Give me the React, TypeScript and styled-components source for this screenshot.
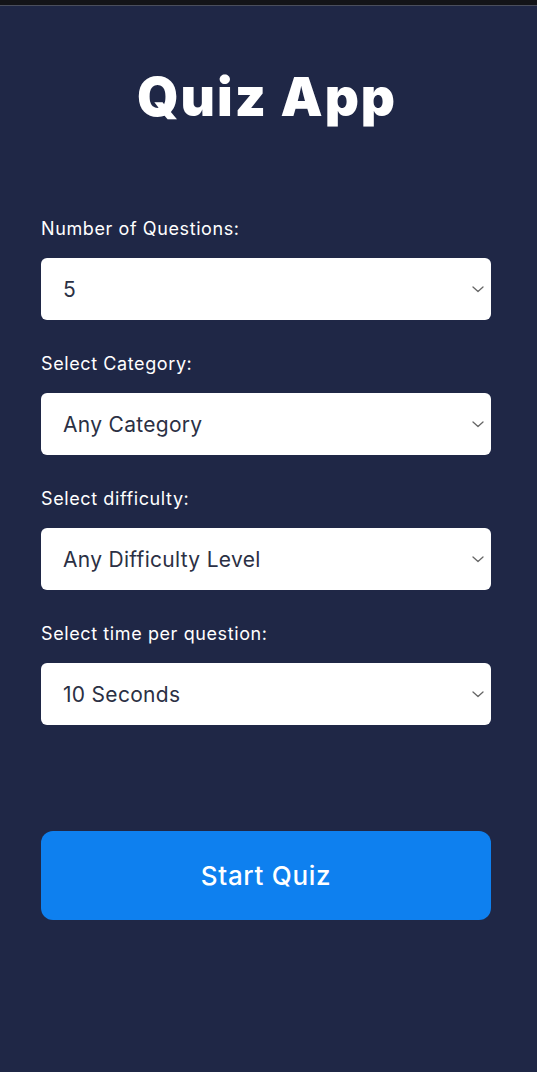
import React from "react";
import styled, { createGlobalStyle } from "styled-components";

const Global = createGlobalStyle`
  html, body { margin: 0; padding: 0; background: #1f2746; }
  body { font-family: "Inter", "Lato", sans-serif; }
`;

const Page = styled.div`
  min-height: 1072px;
  background: #1f2746;
  display: flex;
  flex-direction: column;
`;

const StatusBar = styled.div`
  height: 5px;
  background: #131418;
  border-bottom: 1px solid #4a4e5c;
`;

const Main = styled.main`
  display: flex;
  flex-direction: column;
  padding: 0 46px 0 41px;
`;

const Title = styled.h1`
  margin: 61px 0 0;
  padding-left: 2px;
  font-family: "Inter", sans-serif;
  font-weight: 900;
  font-size: 53px;
  line-height: 60px;
  letter-spacing: 2px;
  color: #ffffff;
  text-align: center;
`;

const Form = styled.div`
  display: flex;
  flex-direction: column;
  gap: 34px;
  margin-top: 92px;
`;

const Field = styled.div`
  display: flex;
  flex-direction: column;
  gap: 19px;
`;

const Label = styled.label`
  font-family: "Inter", sans-serif;
  font-size: 18px;
  line-height: 20px;
  letter-spacing: 0.6px;
  color: #ffffff;
`;

const SelectBox = styled.div`
  height: 62px;
  background: #ffffff;
  border-radius: 6px;
  display: flex;
  align-items: center;
  justify-content: space-between;
  padding: 0 6px 0 22px;
  box-sizing: border-box;
`;

const SelectText = styled.span`
  font-family: "Inter", sans-serif;
  font-size: 21px;
  letter-spacing: 0.3px;
  color: #2b3044;
`;

const Chevron = styled.svg`
  width: 14px;
  height: 14px;
  color: #666;
`;

const StartButton = styled.button`
  margin-top: 106px;
  height: 89px;
  border: none;
  border-radius: 12px;
  background: #0e80ef;
  color: #ffffff;
  font-family: "Inter", sans-serif;
  font-weight: 500;
  font-size: 26px;
  letter-spacing: 0.7px;
`;

const fields = [
  { label: "Number of Questions:", value: "5" },
  { label: "Select Category:", value: "Any Category" },
  { label: "Select difficulty:", value: "Any Difficulty Level" },
  { label: "Select time per question:", value: "10 Seconds" },
];

export default function App() {
  return (
    <Page>
      <Global />
      <StatusBar />
      <Main>
        <Title>Quiz App</Title>
        <Form>
          {fields.map((f) => (
            <Field key={f.label}>
              <Label>{f.label}</Label>
              <SelectBox>
                <SelectText>{f.value}</SelectText>
                <Chevron viewBox="0 0 14 14" fill="none">
                  <path d="M2 5l5 4.5L12 5" stroke="currentColor" strokeWidth="1.3" strokeLinecap="round" strokeLinejoin="round" />
                </Chevron>
              </SelectBox>
            </Field>
          ))}
        </Form>
        <StartButton>Start Quiz</StartButton>
      </Main>
    </Page>
  );
}
